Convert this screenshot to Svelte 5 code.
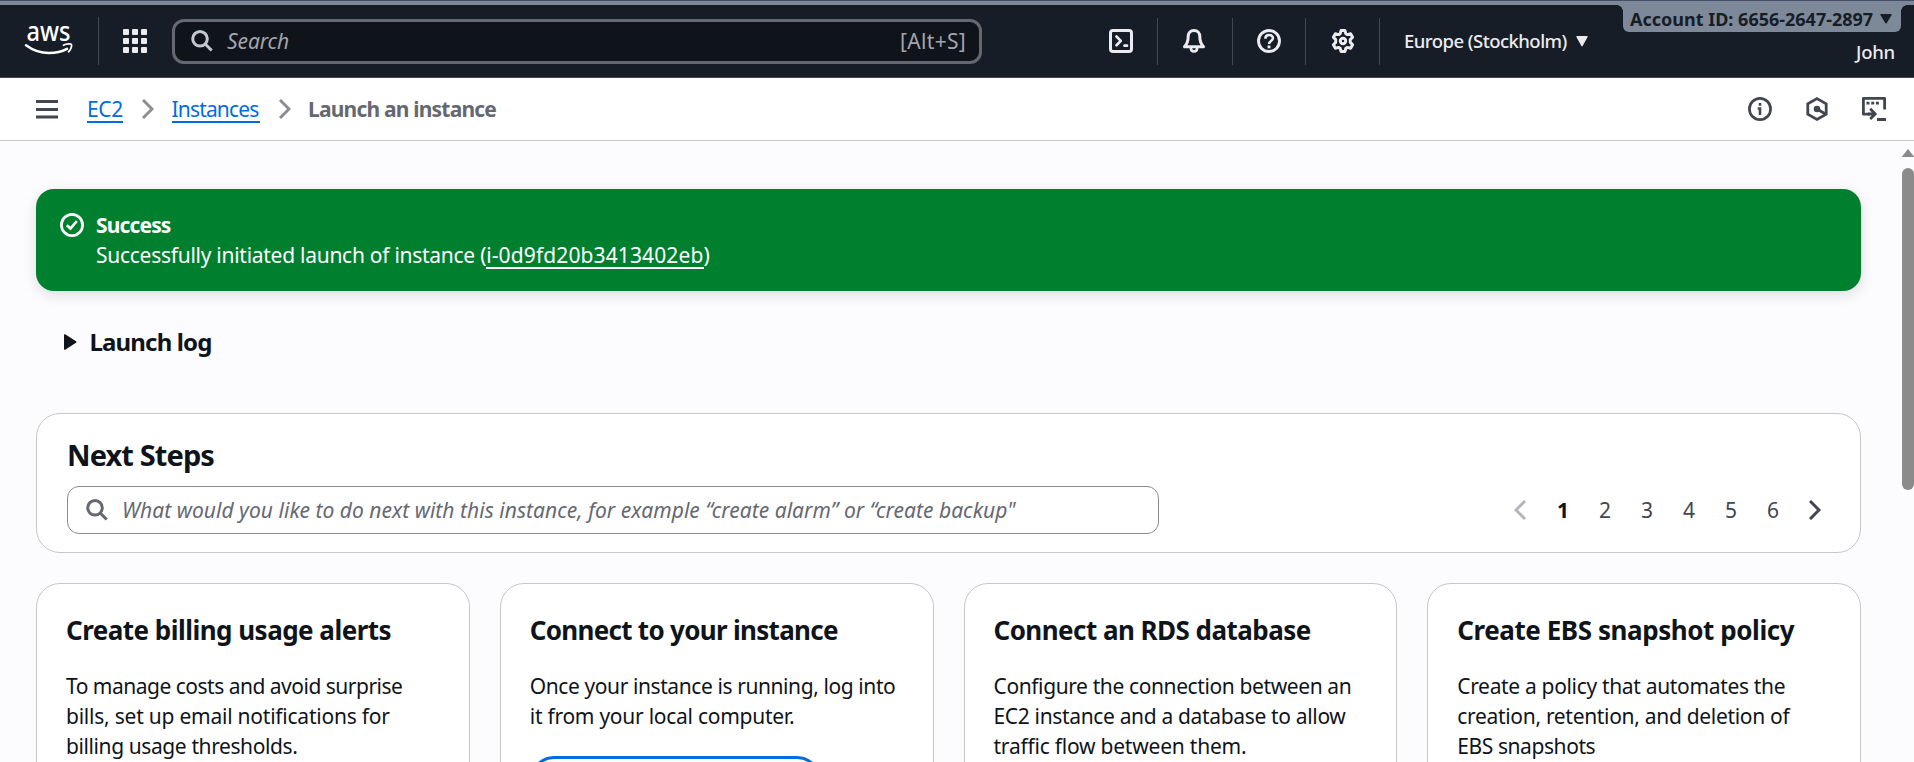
<script>
  const pages = [1, 2, 3, 4, 5, 6];
  // Each line carries its own tracking, in pixels.
  const cards = [
    {
      title: 'Create billing usage alerts', titleGap: -0.52,
      lines: [
        ['To manage costs and avoid surprise', -0.5],
        ['bills, set up email notifications for', -0.23],
        ['billing usage thresholds.', -0.4],
      ],
    },
    {
      title: 'Connect to your instance', titleGap: -0.7, action: true,
      lines: [
        ['Once your instance is running, log into', -0.41],
        ['it from your local computer.', -0.26],
      ],
    },
    {
      title: 'Connect an RDS database', titleGap: -0.54,
      lines: [
        ['Configure the connection between an', -0.39],
        ['EC2 instance and a database to allow', -0.34],
        ['traffic flow between them.', -0.22],
      ],
    },
    {
      title: 'Create EBS snapshot policy', titleGap: -0.43,
      lines: [
        ['Create a policy that automates the', -0.33],
        ['creation, retention, and deletion of', -0.31],
        ['EBS snapshots', -0.42],
      ],
    },
  ];
</script>

<div class="page">
  <header class="topnav">
    <svg class="logo" width="48" height="68" viewBox="0 -18 48 68">
      <text x="1.5" y="16.2" textLength="44" lengthAdjust="spacingAndGlyphs">aws</text>
      <path d="M1 20.2c6.500 4.800 14.500 7.800 23 7.800 6.300 0 13-1.500 18-4.200" fill="none" stroke="#fff" stroke-width="2.500" stroke-linecap="round" />
      <path d="M38.500 20.300c2.800-1.700 7.600-1.700 8-.600.400 1.400-.600 5-3 7" fill="none" stroke="#fff" stroke-width="1.800" stroke-linecap="round" />
    </svg>
    <span class="rule first"></span>
    <svg class="apps" width="24" height="24" viewBox="0 0 24 24" fill="#ebebf0">
      {#each [0, 9, 18] as y}
        {#each [0, 9, 18] as x}
          <rect {x} {y} width="6" height="6" rx="1" />
        {/each}
      {/each}
    </svg>
    <div class="search">
      <svg width="22" height="22" viewBox="0 0 22 22" fill="none" stroke="#c6c6cd" stroke-width="3">
        <circle cx="9" cy="8.800" r="7.300" />
        <path d="M14.200 14l6.500 6.500" />
      </svg>
      <span class="hint">Search</span>
      <span class="key">[Alt+S]</span>
    </div>

    <nav class="tools">
      <span class="tool">
        <svg width="24" height="24" viewBox="0 0 24 24" fill="none" stroke="#ebebf0" stroke-width="3" stroke-linejoin="round" stroke-linecap="round">
          <rect x="1.500" y="1.500" width="21" height="21" rx="2.500" />
          <path d="M7.500 7.500l4.300 4.400-4.300 4.400M15.500 16.700h2.500" stroke-width="2.700" />
        </svg>
      </span>
      <span class="tool wide">
        <svg class="bell" width="24" height="24" viewBox="0 0 24 24" fill="none" stroke="#ebebf0" stroke-width="3" stroke-linejoin="round">
          <path d="M12 1.500c-3.700 0-5.800 2.700-5.800 6 0 5-1.200 7.500-3.700 10.300h19c-2.500-2.800-3.700-5.300-3.700-10.300 0-3.300-2.100-6-5.800-6z" />
          <path d="M8.800 18.800c0 5 6.400 5 6.400 0" stroke-width="2.600" />
        </svg>
      </span>
      <span class="tool">
        <svg width="24" height="24" viewBox="0 0 24 24" fill="none" stroke="#ebebf0" stroke-width="2.900">
          <circle cx="12" cy="12" r="10.500" />
          <path d="M8.300 9.800c0-5 7.600-4.800 7.600-.600 0 3-3.900 2.600-3.900 5.800" stroke-width="2.600" />
          <path d="M12 16.500v2.800" stroke-width="2.900" />
        </svg>
      </span>
      <span class="tool wide">
        <svg width="24" height="24" viewBox="0 0 24 24" fill="none" stroke="#ebebf0" stroke-width="3" stroke-linejoin="round">
          <path d="M10.100 1.500h3.800l.9 3.100 1.700 1 3.100-.800 2 3.500-2.300 2.300v2.800l2.300 2.300-2 3.500-3.100-.800-1.700 1-.9 3.100h-3.800l-.9-3.100-1.700-1-3.100.8-2-3.500 2.300-2.300v-2.800L2.400 8.300l2-3.500 3.100.8 1.700-1z" />
          <circle cx="12" cy="12" r="2.700" />
        </svg>
      </span>
    </nav>

    <div class="region">
      <span>Europe (Stockholm)</span>
      <svg width="12" height="11" viewBox="0 0 12 11" fill="#ebebf0"><path d="M1 0h10q1 0 .6 1L6.600 10q-.6.900-1.200 0L.4 1Q0 0 1 0z" /></svg>
    </div>

    <div class="account">
      <div class="badge">
        <span>Account ID: 6656-2647-2897</span>
        <svg width="12" height="10" viewBox="0 0 12 10" fill="#161d26"><path d="M1 0h10q1 0 .6 1L6.600 9.200q-.6.800-1.200 0L.4 1Q0 0 1 0z" /></svg>
      </div>
      <span class="user">John</span>
    </div>
  </header>

  <div class="crumbs">
    <svg class="menu" width="22" height="19" viewBox="0 0 22 19" fill="#424650">
      <rect width="22" height="3" /><rect y="8" width="22" height="3" /><rect y="15.500" width="22" height="3" />
    </svg>
    <span class="link ec2">EC2</span>
    <svg class="sep" width="12" height="20" viewBox="0 0 12 20" fill="none" stroke="#8c8c94" stroke-width="2.900"><path d="M1 1l9 9-9 9" /></svg>
    <span class="link inst">Instances</span>
    <svg class="sep" width="12" height="20" viewBox="0 0 12 20" fill="none" stroke="#8c8c94" stroke-width="2.900"><path d="M1 1l9 9-9 9" /></svg>
    <span class="current">Launch an instance</span>

    <div class="panels">
      <svg width="24" height="24" viewBox="0 0 24 24" fill="none" stroke="#424650" stroke-width="2.700">
        <circle cx="12" cy="12" r="10.600" />
        <path d="M12 6v2.800M9.700 11.500H12v6.500" stroke-width="2.600" />
      </svg>
      <svg width="24" height="24" viewBox="0 0 24 24" fill="none" stroke="#424650" stroke-width="2.800">
        <path d="M12 1.600l9.200 5.200v10.400L12 22.400l-9.200-5.200V6.800z" />
        <circle cx="12" cy="12" r="3.300" fill="#424650" stroke="none" />
        <path d="M12 12l8.500 5" />
      </svg>
      <svg width="24" height="24" viewBox="0 0 24 24" fill="none" stroke="#424650" stroke-width="2.800">
        <path d="M8 17.200H1.400V1.400h21.200v11" stroke-linejoin="round" />
        <path d="M4.500 6.200h3M9.200 6.200h3M13.900 6.200h3" />
        <path d="M6 17h6.500M8.200 11.800l5 5.100-5 5.100M15 22.500h9" />
      </svg>
    </div>
  </div>

  <div class="body">
    <main>
      <section class="flash">
        <svg width="24" height="24" viewBox="0 0 24 24" fill="none" stroke="#fff" stroke-width="2.700">
          <circle cx="12" cy="12" r="10.600" />
          <path d="M6.800 12.200l3.700 3.400L16.800 8" />
        </svg>
        <div class="flash-copy">
          <div class="flash-title">Success</div>
          <div class="flash-text"><span>Successfully initiated launch of instance (</span><span class="id">i-0d9fd20b3413402eb</span>)</div>
        </div>
      </section>

      <div class="log">
        <svg width="13" height="16" viewBox="0 0 13 16" fill="#0f141a"><path d="M0 1q0-1.200 1.200-.7L12 7.200q1 .8 0 1.600L1.200 15.700Q0 16.200 0 15z" /></svg>
        <span>Launch log</span>
      </div>

      <section class="next">
        <h2>Next Steps</h2>
        <div class="next-row">
          <div class="filter">
            <svg width="22" height="22" viewBox="0 0 22 22" fill="none" stroke="#656871" stroke-width="3">
              <circle cx="9" cy="8.800" r="7.300" />
              <path d="M14.200 14l6.500 6.500" />
            </svg>
            <span>What would you like to do next with this instance, for example “create alarm” or “create backup"</span>
          </div>
          <div class="pager">
            <svg width="12" height="20" viewBox="0 0 12 20" fill="none" stroke="#b4b4bb" stroke-width="2.900"><path d="M11 1l-9 9 9 9" /></svg>
            <div class="nums">
              {#each pages as n}
                <span class:active={n === 1}>{n}</span>
              {/each}
            </div>
            <svg width="12" height="20" viewBox="0 0 12 20" fill="none" stroke="#424650" stroke-width="3"><path d="M1 1l9 9-9 9" /></svg>
          </div>
        </div>
      </section>

      <div class="cards">
        {#each cards as card}
          <article>
            <h3 style="letter-spacing: {card.titleGap}px">{card.title}</h3>
            <p>
              {#each card.lines as [line, gap]}<span style="letter-spacing: {gap}px">{line}</span>{/each}
            </p>
            {#if card.action}<div class="action"></div>{/if}
          </article>
        {/each}
      </div>
    </main>

    <div class="scroll">
      <svg width="12" height="8" viewBox="0 0 12 8" fill="#8b8b8b"><path d="M6 0l6.500 8h-13z" /></svg>
      <div class="thumb"></div>
    </div>
  </div>
</div>

<style>
  :global(body) { overflow: hidden; }
  .page {
    height: 762px;
    overflow: hidden;
    display: flex;
    flex-direction: column;
    background: #fcfcfe;
    color: #0f141a;
    font: 400 21px/30px "Noto Sans", "Open Sans", sans-serif;
    white-space: nowrap;
  }
  * { box-sizing: border-box; }
  svg { display: block; flex: none; }

  .topnav {
    flex: none;
    height: 78px;
    display: flex;
    align-items: center;
    background: #161d26;
    border-top: 5px solid #7d8998;
    border-bottom: 1px solid #424650;
    padding-left: 25px;
    color: #ebebf0;
    position: relative;
  }
  .topnav::before {
    content: "";
    position: absolute;
    inset: -5px 0 auto;
    height: 1px;
    background: #424f66;
  }
  .logo { overflow: visible; }
  .logo text { font: 500 27px "Noto Sans", sans-serif; fill: #fff; }
  .rule { width: 1px; height: 48px; background: #424650; }
  .rule.first { margin-left: 25px; }
  .apps { margin-left: 24px; }
  .search {
    width: 810px;
    height: 45px;
    margin-left: 25px;
    padding: 0 13px 0 16px;
    display: flex;
    align-items: center;
    background: #0f141a;
    border: 3px solid #656871;
    border-radius: 12px;
    color: #a4a4ad;
  }
  .hint { margin-left: 14px; font-style: italic; letter-spacing: -0.1px; }
  .key { margin-left: auto; letter-spacing: 0.3px; }
  .tools { display: flex; margin-left: 103px; }
  .tool {
    width: 73px;
    height: 47px;
    display: flex;
    align-items: center;
    justify-content: center;
    border-right: 1px solid #424650;
  }
  .tool.wide { width: 75px; }
  .tool:last-child { width: 74px; }
  .bell { margin-right: 2px; }
  .region {
    display: flex;
    align-items: center;
    gap: 9px;
    margin-left: 24px;
    font-size: 18.500px;
    font-weight: 500;
    letter-spacing: -0.54px;
  }
  .account {
    align-self: stretch;
    margin-left: auto;
    padding-right: 13px;
    display: flex;
    flex-direction: column;
    align-items: flex-end;
  }
  .badge {
    position: relative;
    width: 278px;
    height: 27px;
    padding: 0 9px 0 7px;
    display: flex;
    align-items: center;
    justify-content: space-between;
    background: #7d8998;
    border-radius: 0 0 6px 6px;
    color: #161d26;
    font-size: 18px;
    font-weight: 700;
    line-height: 27px;
  }
  .badge span { margin-top: 1px; }
  .badge::before, .badge::after {
    content: "";
    position: absolute;
    top: 0;
    width: 6px;
    height: 6px;
  }
  .badge::before { left: -6px; background: radial-gradient(circle at 0 100%, transparent 5.500px, #7d8998 6px); }
  .badge::after { right: -6px; background: radial-gradient(circle at 100% 100%, transparent 5.500px, #7d8998 6px); }
  .user {
    margin: 5px 6px 0 0;
    font-size: 18.500px;
    font-weight: 500;
    letter-spacing: -0.22px;
  }

  .crumbs {
    flex: none;
    height: 63px;
    display: flex;
    align-items: center;
    background: #fff;
    border-bottom: 1px solid #c6c6cd;
    padding: 0 28px 0 36px;
  }
  .link { color: #006ce0; border-bottom: 2px solid #006ce0; line-height: 26px; height: 27px; }
  .ec2 { width: 36px; margin-left: 29px; letter-spacing: -0.4px; }
  .inst { width: 88px; letter-spacing: -0.83px; }
  .sep { margin: 0 17.500px 0 19px; }
  .current { font-weight: 700; color: #656871; letter-spacing: -0.8px; margin-top: -1px; }
  .panels { display: flex; gap: 33px; margin-left: auto; }

  .body { flex: 1; min-height: 0; display: flex; }
  main { flex: none; width: 1902px; padding: 48px 41px 0 36px; }
  .flash {
    height: 102px;
    padding: 20px 24px;
    display: flex;
    gap: 12px;
    background: #00802f;
    color: #fff;
    border-radius: 18px;
    box-shadow: 0 4px 14px rgba(15, 20, 26, 0.13);
  }
  .flash svg { margin-top: 4px; }
  .flash-copy { padding-top: 1px; }
  .flash-title { font-weight: 700; letter-spacing: -0.85px; }
  .flash-text { display: flex; letter-spacing: -0.27px; }
  .id { letter-spacing: 0.12px; border-bottom: 2px solid #fff; height: 29px; }
  .log {
    display: flex;
    align-items: center;
    gap: 12.500px;
    margin: 36px 0 0 28px;
    font-size: 24px;
    font-weight: 700;
    letter-spacing: -0.85px;
  }
  .next {
    height: 140px;
    margin-top: 56px;
    padding: 23px 39px 0 30px;
    background: #fff;
    border: 1px solid #c6c6cd;
    border-radius: 24px;
  }
  h2 { margin: 0; font-size: 29px; line-height: 36px; font-weight: 700; letter-spacing: -0.9px; }
  .next-row { display: flex; align-items: center; justify-content: space-between; margin-top: 13px; }
  .filter {
    width: 1092px;
    height: 48px;
    padding: 0 18px;
    display: flex;
    align-items: center;
    gap: 14px;
    border: 1px solid #8c8c94;
    border-radius: 12px;
    color: #656871;
    font-style: italic;
    letter-spacing: 0.035px;
  }
  .pager { display: flex; align-items: center; color: #424650; }
  .nums { display: flex; margin: 0 15px 0 16px; }
  .nums span { width: 42px; text-align: center; }
  .nums .active { font-weight: 700; color: #0f141a; }

  .cards { display: grid; grid-template-columns: repeat(4, 1fr); gap: 30px; margin-top: 30px; }
  article {
    height: 300px;
    padding: 31px 29px;
    background: #fff;
    border: 1px solid #c6c6cd;
    border-radius: 24px;
  }
  h3 { margin: 0; font-size: 26px; line-height: 30px; font-weight: 700; }
  p { margin: 27px 0 0; line-height: 29.900px; }
  p span { display: block; }
  .action { width: 291px; height: 48px; margin-top: 24px; border: 3px solid #006ce0; border-radius: 24px; }

  .scroll { width: 12px; padding-top: 8px; }
  .thumb { height: 322px; margin-top: 11px; background: #8b8b8b; border-radius: 6px; }
</style>
